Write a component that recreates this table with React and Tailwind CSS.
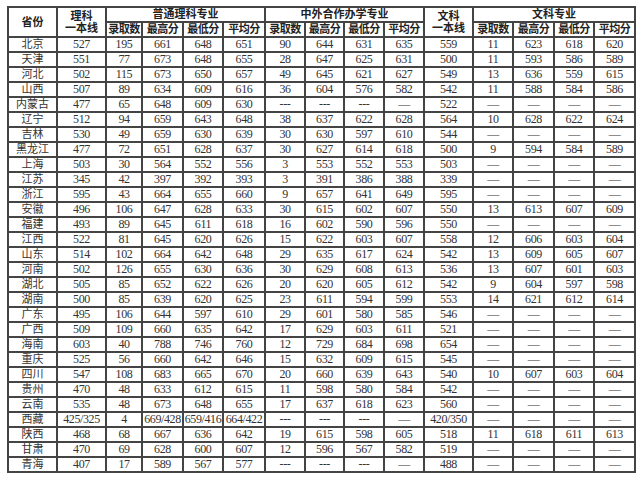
import React from 'react';

const D = '—';
const H = '---';

const widths = [49, 49, 36, 41, 40, 42, 40, 39, 40, 40, 49, 40, 41, 40, 41];

const rows = [
  ['北京', '527', '195', '661', '648', '651', '90', '644', '631', '635', '559', '11', '623', '618', '620'],
  ['天津', '551', '77', '673', '648', '655', '28', '647', '625', '631', '500', '11', '593', '586', '589'],
  ['河北', '502', '115', '673', '650', '657', '49', '645', '621', '627', '549', '13', '636', '559', '615'],
  ['山西', '507', '89', '634', '609', '616', '36', '604', '576', '582', '542', '11', '588', '584', '586'],
  ['内蒙古', '477', '65', '648', '609', '630', H, H, H, D, '522', D, D, D, D],
  ['辽宁', '512', '94', '659', '643', '648', '38', '637', '622', '628', '564', '10', '628', '622', '624'],
  ['吉林', '530', '49', '659', '630', '639', '30', '630', '597', '610', '544', D, D, D, D],
  ['黑龙江', '477', '72', '651', '628', '637', '30', '627', '614', '618', '500', '9', '594', '584', '589'],
  ['上海', '503', '30', '564', '552', '556', '3', '553', '552', '553', '503', D, D, D, D],
  ['江苏', '345', '42', '397', '392', '393', '3', '391', '386', '388', '339', D, D, D, D],
  ['浙江', '595', '43', '664', '655', '660', '9', '657', '641', '649', '595', D, D, D, D],
  ['安徽', '496', '106', '647', '628', '633', '30', '615', '602', '607', '550', '13', '613', '607', '609'],
  ['福建', '493', '89', '645', '611', '618', '16', '602', '590', '596', '550', D, D, D, D],
  ['江西', '522', '81', '645', '620', '626', '15', '622', '603', '607', '558', '12', '606', '603', '604'],
  ['山东', '514', '102', '664', '642', '648', '29', '635', '617', '624', '542', '13', '609', '605', '607'],
  ['河南', '502', '126', '655', '630', '636', '30', '629', '608', '613', '536', '13', '607', '601', '603'],
  ['湖北', '505', '85', '652', '622', '626', '20', '620', '605', '612', '542', '9', '604', '597', '598'],
  ['湖南', '500', '85', '639', '620', '625', '23', '611', '594', '599', '553', '14', '621', '612', '614'],
  ['广东', '495', '106', '644', '597', '610', '29', '601', '580', '585', '546', D, D, D, D],
  ['广西', '509', '109', '660', '635', '642', '17', '629', '603', '611', '521', D, D, D, D],
  ['海南', '603', '40', '788', '746', '760', '12', '729', '684', '698', '654', D, D, D, D],
  ['重庆', '525', '56', '660', '642', '646', '15', '632', '609', '615', '545', D, D, D, D],
  ['四川', '547', '108', '683', '665', '670', '20', '660', '639', '643', '540', '10', '607', '603', '604'],
  ['贵州', '470', '48', '633', '612', '615', '11', '598', '580', '584', '542', D, D, D, D],
  ['云南', '535', '48', '673', '648', '655', '17', '637', '618', '623', '560', D, D, D, D],
  ['西藏', '425/325', '4', '669/428', '659/416', '664/422', H, H, H, D, '420/350', D, D, D, D],
  ['陕西', '468', '68', '667', '636', '642', '19', '615', '598', '605', '518', '11', '618', '611', '613'],
  ['甘肃', '470', '69', '628', '600', '607', '12', '596', '567', '582', '519', D, D, D, D],
  ['青海', '407', '17', '589', '567', '577', H, H, H, D, '488', D, D, D, D],
];

const sub = ['录取数', '最高分', '最低分', '平均分'];

// classic bordered table: 2px dark grid lines, tight cells
const cell = 'border-2 border-[#444] p-0 text-center align-middle whitespace-nowrap';
const head = `${cell} font-bold text-[11px] text-[#222]`;

export default function App() {
  return (
    <div className="w-[640px] h-[480px] bg-white pl-[7px] pt-[6px] overflow-hidden">
      <table
        className="border-collapse table-fixed w-[629px] text-[#333]"
        style={{ fontFamily: '"Liberation Serif", "Noto Sans CJK SC", serif' }}
      >
        <colgroup>
          {widths.map((w, i) => (
            <col key={i} style={{ width: w }} />
          ))}
        </colgroup>
        <thead>
          <tr className="h-[15px]">
            <th rowSpan={2} className={`${head} leading-[13px]`}>省份</th>
            <th rowSpan={2} className={`${head} leading-[12px]`}>
              理科
              <br />
              一本线
            </th>
            <th colSpan={4} className={`${head} leading-[11px]`}>普通理科专业</th>
            <th colSpan={4} className={`${head} leading-[11px]`}>中外合作办学专业</th>
            <th rowSpan={2} className={`${head} leading-[12px]`}>
              文科
              <br />
              一本线
            </th>
            <th colSpan={4} className={`${head} leading-[11px]`}>文科专业</th>
          </tr>
          <tr className="h-[15px]">
            {[0, 1, 2].map((g) =>
              sub.map((s) => (
                <th key={`${g}-${s}`} className={`${head} leading-[11px] tracking-[-0.5px]`}>
                  {s}
                </th>
              ))
            )}
          </tr>
        </thead>
        <tbody>
          {rows.map((r) => (
            <tr key={r[0]} className="h-[15px]">
              {r.map((v, i) => (
                <td
                  key={i}
                  className={`${cell} leading-[11px] ${
                    i === 0 ? 'text-[11px]' : 'text-[12px] tracking-[-0.4px]'
                  }`}
                >
                  {v}
                </td>
              ))}
            </tr>
          ))}
        </tbody>
      </table>
    </div>
  );
}
